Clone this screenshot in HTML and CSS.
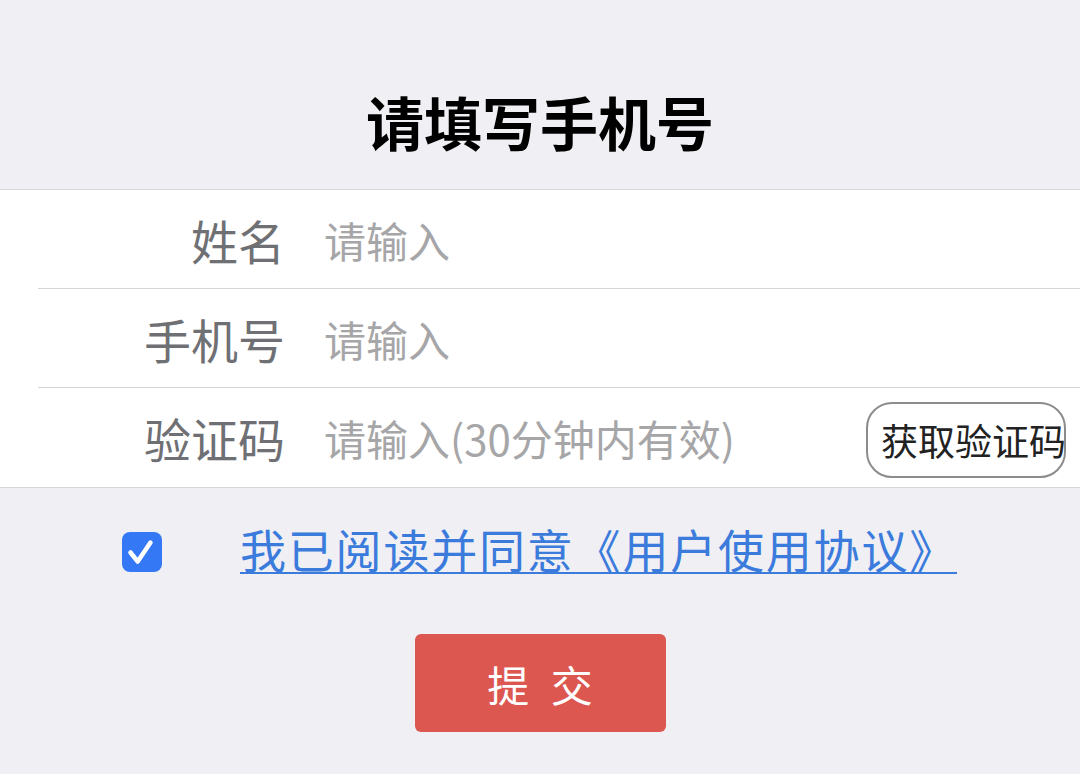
FILE: index.html
```html
<!DOCTYPE html>
<html lang="zh-CN">
<head>
    <meta charset="UTF-8">
    <meta name="viewport" content="width=device-width, initial-scale=1.0">
    <title>请填写手机号</title>
    <link rel="stylesheet" href="styles.css">
</head>
<body>
    <h1 class="title">请填写手机号</h1>
    <div class="form-panel">
        <div class="form-row">
            <label class="form-label" for="nameInput">姓名</label>
            <input class="form-input" type="text" id="nameInput" placeholder="请输入">
        </div>
        <div class="form-row">
            <label class="form-label" for="phoneInput">手机号</label>
            <input class="form-input" type="tel" id="phoneInput" placeholder="请输入">
        </div>
        <div class="form-row last">
            <label class="form-label" for="codeInput">验证码</label>
            <input class="form-input" type="text" id="codeInput" placeholder="请输入(30分钟内有效)">
            <button class="code-button" type="button">获取验证码</button>
        </div>
    </div>
    <div class="agree-row">
        <span class="checkbox">
            <svg width="40" height="40" viewBox="0 0 40 40">
                <rect x="0" y="0" width="40" height="40" rx="8" fill="#3478f6"/>
                <path d="M8.5 20.5 L15.7 29.5 L28.5 10.5" fill="none" stroke="#fff" stroke-width="4.5" stroke-linecap="round" stroke-linejoin="round"/>
            </svg>
        </span>
        <a class="agree-link" href="#">我已阅读并同意《用户使用协议》</a>
    </div>
    <div class="submit-wrap">
        <button class="submit-button" type="button">提 交</button>
    </div>
</body>
</html>
```

FILE: styles.css
```css
body {
    margin: 0;
    background: #efeff4;
    font-family: "Noto Sans CJK SC", "Noto Sans", sans-serif;
    color: #000;
}
.title {
    margin: 0;
    height: 189px;
    box-sizing: border-box;
    padding-top: 93px;
    font-size: 58px;
    line-height: 57px;
    font-weight: bold;
    text-align: center;
}
.form-panel {
    background: #fff;
    border-top: 1px solid #d6d6da;
    border-bottom: 1px solid #d6d6da;
}
.form-row {
    display: flex;
    align-items: center;
    height: 98px;
    margin-left: 38px;
    border-bottom: 1px solid #d6d6da;
}
.form-row.last {
    height: 99px;
    border-bottom: none;
}
.form-label {
    width: 247px;
    flex-shrink: 0;
    text-align: right;
    font-size: 47px;
    color: #6f7074;
}
.form-input {
    flex: 1;
    min-width: 0;
    margin-left: 39px;
    border: none;
    outline: none;
    padding: 0;
    font-family: inherit;
    font-size: 42px;
    color: #333;
    background: transparent;
}
.form-input::placeholder {
    color: #a6a6a8;
}
.code-button {
    flex-shrink: 0;
    width: 200px;
    height: 76px;
    margin-right: 14px;
    margin-top: 4px;
    padding: 0 0 0 13px;
    text-align: left;
    white-space: nowrap;
    overflow: visible;
    border: 2px solid #8c8c8c;
    border-radius: 26px;
    background: #fff;
    font-family: inherit;
    font-size: 37px;
    color: #222;
}
.agree-row {
    display: flex;
    align-items: center;
    height: 128px;
    padding-left: 122px;
}
.checkbox {
    display: flex;
    width: 40px;
    height: 40px;
}
.agree-link {
    margin-left: 78px;
    margin-top: -8px;
    font-size: 46px;
    letter-spacing: 1.8px;
    color: #3a7bdc;
    text-decoration: underline;
    text-decoration-thickness: 2px;
    text-underline-offset: 4px;
}
.submit-wrap {
    display: flex;
    justify-content: center;
    padding-top: 18px;
}
.submit-button {
    width: 251px;
    height: 98px;
    border: none;
    border-radius: 6px;
    background: #dc5750;
    color: #fff;
    font-family: inherit;
    font-size: 42px;
    letter-spacing: 6px;
    padding: 0 0 0 6px;
}
```
